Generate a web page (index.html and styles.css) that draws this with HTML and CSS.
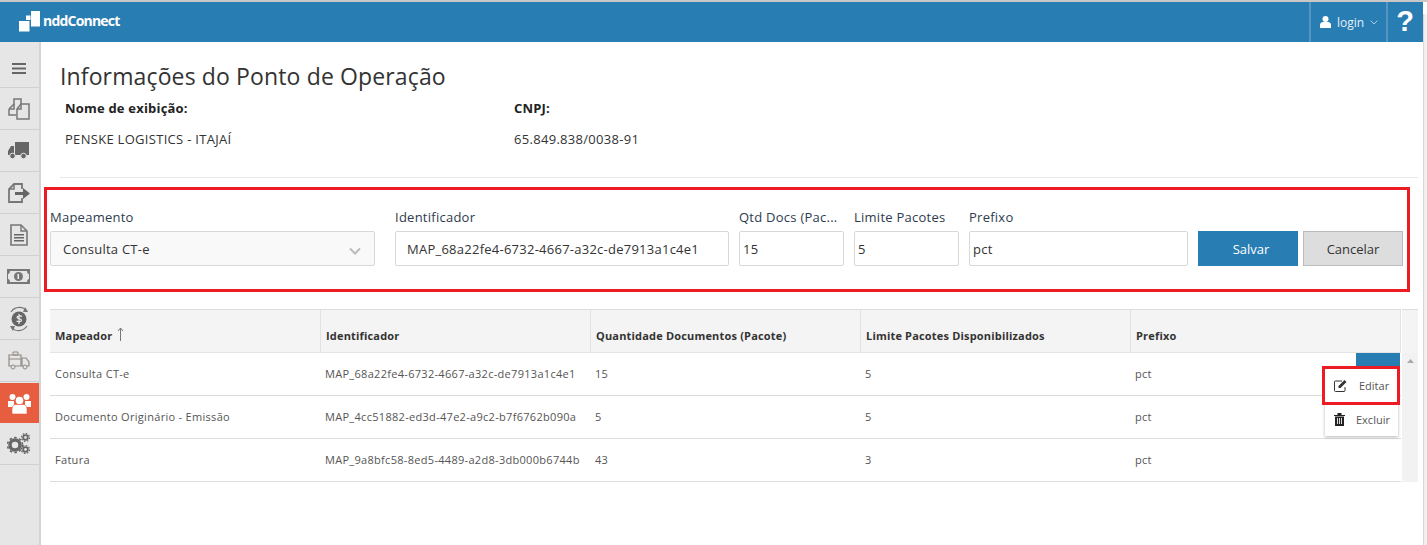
FILE: index.html
```html
<!DOCTYPE html>
<html lang="pt-BR">
<head>
<meta charset="utf-8">
<title>nddConnect</title>
<link rel="stylesheet" href="styles.css">
</head>
<body>
<div class="app">
  <header class="topbar">
    <div class="brand">
      <svg class="brand-logo" viewBox="0 0 21 21" width="21" height="21"><path d="M0 10h10.500v10.500H0zM7 4.500h4.500V9H7zM12 0h9v15.500h-9z" fill="#fff"/></svg>
      <span class="brand-name">nddConnect</span>
    </div>
    <div class="top-actions">
      <div class="login">
        <svg class="user-icon" viewBox="0 0 11 12" width="11" height="12"><circle cx="5.500" cy="3" r="3" fill="#fff"/><path d="M0 12V9c0-2 1.500-3 3-3h5c1.500 0 3 1 3 3v3z" fill="#fff"/></svg>
        <span>login</span>
        <svg class="caret" viewBox="0 0 8 5" width="8" height="5"><path d="M.5.5 4 4 7.500.5" fill="none" stroke="#a9cbe3" stroke-width="1"/></svg>
      </div>
      <div class="help">?</div>
    </div>
  </header>
  <div class="body-row">
    <nav class="sidebar">
      <div class="side-item side-first">
        <svg viewBox="0 0 14 11" width="14" height="11"><path d="M0 0h14v2H0zM0 4.500h14v2H0zM0 9h14v2H0z" fill="#666"/></svg>
      </div>
      <div class="side-item">
        <svg viewBox="0 0 22 22" width="22" height="22"><path d="M1 11l5-5V1h7v5" fill="none" stroke="#777" stroke-width="1.500"/><path d="M1 11v6h7M1 11h5V6" fill="none" stroke="#777" stroke-width="1.500"/><path d="M9 11l4-5h8v15H9z" fill="#e6e6e6" stroke="#777" stroke-width="1.500"/><path d="M9 11h4V6" fill="none" stroke="#777" stroke-width="1.500"/></svg>
      </div>
      <div class="side-item">
        <svg viewBox="0 0 21 17" width="21" height="17"><path d="M7 0h14v13H7zM6 4v9H0V9l3-5z" fill="#666"/><circle cx="4.500" cy="14" r="2.800" fill="#666" stroke="#e6e6e6"/><circle cx="15.500" cy="14" r="2.800" fill="#666" stroke="#e6e6e6"/></svg>
      </div>
      <div class="side-item">
        <svg viewBox="0 0 22 20" width="22" height="20"><path d="M14 6V1H6L1 6v13h13v-4" fill="none" stroke="#777" stroke-width="1.800"/><path d="M1 6h5V1" fill="none" stroke="#777" stroke-width="1.500"/><path d="M7 9h8V5l7 5.500-7 5.500v-4H7z" fill="#666"/></svg>
      </div>
      <div class="side-item">
        <svg viewBox="0 0 18 22" width="18" height="22"><path d="M1 1h10l6 6v14H1z" fill="none" stroke="#777" stroke-width="1.600"/><path d="M11 1v6h6" fill="none" stroke="#777" stroke-width="1.400"/><path d="M4 10h10v1.500H4zM4 13h10v1.500H4zM4 16h10v1.500H4z" fill="#666"/></svg>
      </div>
      <div class="side-item">
        <svg viewBox="0 0 23 15" width="23" height="15"><path d="M0 0h23v15H0z" fill="#777"/><path d="M3 2h17c0 2 1 3 2 3v5c-1 0-2 1-2 3H3c0-2-1-3-2-3V5c1 0 2-1 2-3z" fill="#e6e6e6"/><circle cx="11.500" cy="7.500" r="4.500" fill="#777"/><path d="M10.500 5h1.500v5h-1.500z" fill="#eee"/></svg>
      </div>
      <div class="side-item">
        <svg viewBox="0 0 22 26" width="22" height="26"><circle cx="11" cy="13" r="7.500" fill="#666"/><path d="M14 10.500c-1-1-5-1-5 .8s4.500 1 4.500 3-4 1.500-5 .5M11 8v10" fill="none" stroke="#eee" stroke-width="1.200"/><path d="M3 6c4-6 12-6 16-1M19 20c-4 6-12 6-16 1" fill="none" stroke="#777" stroke-width="1.200"/><path d="M17 1l3 5-5 0zM5 25l-3-5 5 0z" fill="#777"/></svg>
      </div>
      <div class="side-item">
        <svg viewBox="0 0 22 19" width="22" height="19"><path d="M1 4h12v11H1z" fill="none" stroke="#8f8a84" stroke-width="1.200"/><path d="M5 1h5v3H5zM1 8h12" fill="none" stroke="#8f8a84"/><path d="M14 7h4l3 4v4h-7z" fill="none" stroke="#8f8a84" stroke-width="1.200"/><circle cx="5" cy="16" r="2" fill="#e6e6e6" stroke="#8f8a84"/><circle cx="17" cy="16" r="2" fill="#e6e6e6" stroke="#8f8a84"/></svg>
      </div>
      <div class="side-item side-active">
        <svg viewBox="0 0 23 21" width="23" height="21"><circle cx="4.500" cy="4" r="3" fill="#fff"/><circle cx="18.500" cy="4" r="3" fill="#fff"/><path d="M0 8h6v6H0zM17 8h6v6h-6z" fill="#fff"/><circle cx="11.500" cy="7.500" r="4.300" fill="#fff" stroke="#e75d3f"/><path d="M4 21v-5c0-3 2-4.500 4-4.500h7c2 0 4 1.500 4 4.500v5z" fill="#fff" stroke="#e75d3f" stroke-width=".6"/></svg>
      </div>
      <div class="side-item">
        <svg viewBox="0 0 23 21" width="23" height="21"><circle cx="8" cy="12" r="5" fill="none" stroke="#666" stroke-width="3.500"/><circle cx="8" cy="12" r="7.500" fill="none" stroke="#666" stroke-width="1.600" stroke-dasharray="2.500 2.400"/><circle cx="18.500" cy="4.500" r="2.300" fill="none" stroke="#666" stroke-width="1.800"/><circle cx="18.500" cy="4.500" r="4" fill="none" stroke="#666" stroke-width="1.200" stroke-dasharray="1.600 1.500"/><circle cx="18.500" cy="16.500" r="2.300" fill="none" stroke="#666" stroke-width="1.800"/><circle cx="18.500" cy="16.500" r="4" fill="none" stroke="#666" stroke-width="1.200" stroke-dasharray="1.600 1.500"/></svg>
      </div>
    </nav>
    <main class="content">
      <h1 class="page-title">Informações do Ponto de Operação</h1>
      <section class="info">
        <div class="info-col info-name">
          <div class="info-label">Nome de exibição:</div>
          <div class="info-value">PENSKE LOGISTICS - ITAJAÍ</div>
        </div>
        <div class="info-col">
          <div class="info-label">CNPJ:</div>
          <div class="info-value">65.849.838/0038-91</div>
        </div>
      </section>
      <hr class="divider">
      <form class="edit-form">
        <div class="field f-map">
          <label class="field-label">Mapeamento</label>
          <div class="select">
            <span>Consulta CT-e</span>
            <svg viewBox="0 0 12 8" width="12" height="8"><path d="M1 1.500 6 6.500 11 1.500" fill="none" stroke="#bbb" stroke-width="2"/></svg>
          </div>
        </div>
        <div class="field f-id">
          <label class="field-label">Identificador</label>
          <div class="input">MAP_68a22fe4-6732-4667-a32c-de7913a1c4e1</div>
        </div>
        <div class="field f-qtd">
          <label class="field-label">Qtd Docs (Pac...</label>
          <div class="input input-tight">15</div>
        </div>
        <div class="field f-lim">
          <label class="field-label">Limite Pacotes</label>
          <div class="input input-tight">5</div>
        </div>
        <div class="field f-pre">
          <label class="field-label">Prefixo</label>
          <div class="input input-tight">pct</div>
        </div>
        <div class="buttons">
          <button type="button" class="btn btn-save">Salvar</button>
          <button type="button" class="btn btn-cancel">Cancelar</button>
        </div>
      </form>
      <section class="grid-wrap">
        <div class="grid">
          <div class="row row-head">
            <div class="cell">Mapeador <svg class="sort" viewBox="0 0 7 14" width="7" height="14"><path d="M3.500 1v13M1 4 3.500 1 6 4" fill="none" stroke="#777" stroke-width="1"/></svg></div>
            <div class="cell">Identificador</div>
            <div class="cell">Quantidade Documentos (Pacote)</div>
            <div class="cell">Limite Pacotes Disponibilizados</div>
            <div class="cell">Prefixo</div>
          </div>
          <div class="row">
            <div class="cell">Consulta CT-e</div>
            <div class="cell">MAP_68a22fe4-6732-4667-a32c-de7913a1c4e1</div>
            <div class="cell">15</div>
            <div class="cell">5</div>
            <div class="cell">pct</div>
          </div>
          <div class="row">
            <div class="cell">Documento Originário - Emissão</div>
            <div class="cell">MAP_4cc51882-ed3d-47e2-a9c2-b7f6762b090a</div>
            <div class="cell">5</div>
            <div class="cell">5</div>
            <div class="cell">pct</div>
          </div>
          <div class="row">
            <div class="cell">Fatura</div>
            <div class="cell">MAP_9a8bfc58-8ed5-4489-a2d8-3db000b6744b</div>
            <div class="cell">43</div>
            <div class="cell">3</div>
            <div class="cell">pct</div>
          </div>
        </div>
        <div class="grid-scroll">
          <div class="grid-scroll-head"></div>
          <svg class="scroll-up" viewBox="0 0 7 4" width="7" height="4"><path d="M3.500 0 7 4H0z" fill="#aaa"/></svg>
        </div>
        <div class="action-tab"></div>
        <div class="action-menu">
          <div class="menu-item menu-edit">
            <svg viewBox="0 0 14 13" width="14" height="13"><path d="M11 8v3.500a1 1 0 0 1-1 1H1.500a1 1 0 0 1-1-1V3a1 1 0 0 1 1-1H8" fill="none" stroke="#333" stroke-width="1"/><path d="M4.500 9V7l6-6 2 2-6 6z" fill="#333"/></svg>
            <span>Editar</span>
          </div>
          <div class="menu-item menu-del">
            <svg viewBox="0 0 11 13" width="11" height="13"><path d="M0 2h11v1H0zM3.500 0h4v2h-4z" fill="#222"/><path d="M1 3.500h9V13H1z" fill="#222"/><path d="M3 5h1v6H3zM5 5h1v6H5zM7 5h1v6H7z" fill="#ddd"/></svg>
            <span>Excluir</span>
          </div>
        </div>
        <div class="highlight"></div>
      </section>
    </main>
    <div class="page-scroll"></div>
  </div>
</div>
</body>
</html>
```
FILE: styles.css
```css
* { box-sizing: border-box; }
html, body { margin: 0; height: 100%; overflow: hidden; background: #fff; }
body { font-family: "Open Sans", sans-serif; color: #333; }
.app { height: 545px; display: flex; flex-direction: column; border-top: 2px solid #c8c8c8; }
.topbar { height: 40px; margin-right: 4px; background: #287db3; display: flex; justify-content: space-between; color: #fff; flex: none; }
.brand { display: flex; align-items: center; padding-left: 19px; gap: 3px; }
.brand-logo { margin-top: -1px; }
.brand-name { font-size: 14px; font-weight: 700; letter-spacing: -.8px; margin-top: -3px; }
.top-actions { display: flex; }
.login { width: 79px; border-left: 2px solid #5595c2; border-right: 2px solid #5595c2; display: flex; align-items: center; padding-left: 9px; gap: 6px; font-size: 12px; color: #e4eff6; }
.help { width: 35px; text-align: center; font-family: "Liberation Sans", sans-serif; font-weight: 700; font-size: 29px; line-height: 38px; padding-right: 1px; }
.body-row { flex: 1; display: flex; min-height: 0; }
.sidebar { width: 41px; flex: none; background: #e6e6e6; border-right: 2px solid #d4d4d4; }
.side-item { height: 42px; display: flex; align-items: center; justify-content: center; border-bottom: 1px solid #d0d0d0; padding-right: 2px; }
.side-first { height: 46px; padding-top: 7px; }
.side-active { background: #e75d3f; height: 40px; border-bottom: 0; margin-top: 1px; padding-right: 0; }
.content { flex: 1; min-width: 0; padding: 0 0 0 3px; position: relative; }
.page-title { margin: 19px 0 0 16px; font-size: 23px; letter-spacing: .13px; line-height: 30px; color: #333; font-weight: 500; }
.info { display: flex; margin: 8px 0 0 21px; font-size: 12px; }
.info-col { display: flex; flex-direction: column; }
.info-name { width: 449px; }
.info-label { font-weight: 700; font-size: 13px; letter-spacing: .2px; line-height: 18px; color: #222; }
.info-value { margin-top: 13px; line-height: 18px; color: #333; font-size: 13px; letter-spacing: .3px; }
.divider { margin: 29px 5px 0 16px; border: 0; border-top: 1px solid #e8e8e8; }
.edit-form { margin: 9px 0 0 0; width: 1366px; height: 105px; border: 3px solid #ed1c24; display: flex; align-items: flex-start; padding: 18px 0 0 3px; }
.field { display: flex; flex-direction: column; margin-right: 10px; }
.field-label { font-size: 13px; letter-spacing: .25px; line-height: 18px; font-weight: 500; color: #2d3b4d; margin-bottom: 5px; white-space: nowrap; overflow: hidden; }
.f-map { width: 325px; margin-right: 20px; }
.f-id { width: 334px; }
.f-qtd, .f-lim { width: 105px; }
.f-pre { width: 219px; }
.select, .input { height: 35px; border: 1px solid #d8d8d8; border-radius: 2px; font-size: 13px; letter-spacing: .25px; display: flex; align-items: center; color: #333; }
.select { background: #f9f9f9; padding: 0 13px 0 12px; justify-content: space-between; }
.select svg { margin-top: 4px; }
.input { padding-left: 11px; background: #fff; white-space: nowrap; }
.input-tight { padding-left: 3px; }
.buttons { display: flex; gap: 5px; margin-top: 23px; }
.btn { width: 100px; height: 35px; font-family: inherit; font-size: 13px; border: 0; padding: 0; }
.btn-save { background: #287db3; color: #fff; padding-left: 6px; }
.btn-cancel { background: #ddd; border: 1px solid #bbb; color: #333; }
.grid-wrap { margin: 17px 0 0 6px; width: 1367px; display: flex; position: relative; }
.grid { width: 1351px; flex: none; }
.row { display: grid; grid-template-columns: 270px 270px 270px 270px 270px; height: 43px; border-bottom: 1px solid #dcdcdc; font-size: 11px; letter-spacing: .3px; color: #555; align-items: center; }
.row-head { grid-template-columns: 271px 270px 270px 270px 270px; height: 44px; background: #f4f4f4; border-top: 1px solid #dcdcdc; border-bottom: 1px solid #e4e4e4; font-weight: 700; letter-spacing: .18px; color: #333; }
.cell { padding: 0 5px; white-space: nowrap; position: relative; top: -1px; }
.row-head .cell { height: 100%; display: flex; align-items: center; padding-top: 8px; border-right: 1px solid #e2e2e2; gap: 5px; top: 0; }
.sort { margin-top: -3px; }
.grid-scroll { width: 16px; margin-left: 1px; background: #f2f2f2; display: flex; flex-direction: column; align-items: center; height: 173px; flex: none; }
.grid-scroll-head { height: 44px; width: 100%; border-top: 1px solid #dcdcdc; background: #f4f4f4; }
.scroll-up { margin-top: 6px; }
.action-tab { position: absolute; left: 1306px; top: 44px; width: 44px; height: 20px; background: #287db3; }
.action-menu { position: absolute; left: 1275px; top: 58px; width: 73px; height: 69px; background: #fff; box-shadow: 0 1px 3px rgba(0, 0, 0, .3); font-size: 11px; color: #555; }
.menu-item { display: flex; align-items: center; }
.menu-edit { height: 37px; padding: 0 0 0 9px; gap: 11px; }
.menu-del { height: 31px; padding: 0 0 0 9px; gap: 11px; }
.highlight { position: absolute; left: 1272px; top: 57px; width: 78px; height: 39px; border: 3px solid #ed1c24; }
.page-scroll { width: 4px; flex: none; background: #f0f0f0; margin-top: -28px; border-left: 1px solid #d8d8d8; }
```
